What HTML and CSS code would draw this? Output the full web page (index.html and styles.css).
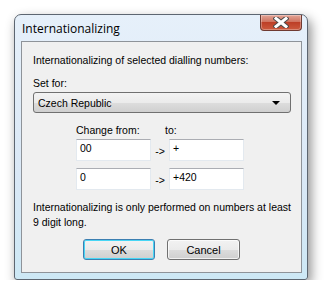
FILE: index.html
```html
<!DOCTYPE html>
<html lang="en">
  <head>
    <meta charset="UTF-8" />
    <title>Internationalizing</title>
    <link rel="stylesheet" href="styles.css">
  </head>
  <body>
    <div class="window">
      <div class="titlebar">
        <span class="title">Internationalizing</span>
        <button class="close" aria-label="Close">
          <svg width="16" height="11" viewBox="0 0 16 11">
            <path d="M3 1.5 L13 9.5 M13 1.5 L3 9.5" stroke="#4a4a4a" stroke-width="5" stroke-linecap="square"/>
            <path d="M3 1.5 L13 9.5 M13 1.5 L3 9.5" stroke="#ffffff" stroke-width="3" stroke-linecap="square"/>
          </svg>
        </button>
      </div>
      <div class="client">
        <p class="line">Internationalizing of selected dialling numbers:</p>
        <p class="label">Set for:</p>
        <div class="combo">
          <span>Czech Republic</span>
          <span class="arrow"></span>
        </div>

        <div class="rules">
          <div class="rule-head">
            <span class="col-from">Change from:</span>
            <span class="col-to">to:</span>
          </div>
          <div class="rule">
            <div class="edit">00</div>
            <span class="sep">-&gt;</span>
            <div class="edit">+</div>
          </div>
          <div class="rule">
            <div class="edit">0</div>
            <span class="sep">-&gt;</span>
            <div class="edit">+420</div>
          </div>
        </div>

        <p class="note">Internationalizing is only performed on numbers at least 9 digit long.</p>

        <div class="buttons">
          <button class="btn default">OK</button>
          <button class="btn">Cancel</button>
        </div>
      </div>
    </div>
  </body>
</html>
```

FILE: styles.css
```css
body {
  margin: 0;
  padding: 0;
  background-color: #ffffff;
  font-family: 'Liberation Sans', Arial, sans-serif;
  font-size: 10.5px;
  color: #000000;
}
.window {
  box-sizing: border-box;
  width: 294px;
  height: 266px;
  margin: 14px 0 0 14px;
  border: 1px solid #5d6671;
  border-radius: 7px 7px 3px 3px;
  background: linear-gradient(#e6f0fa, #dae8f6 60%, #cde8f5);
  box-shadow: 3px 5px 12px rgba(0, 0, 0, 0.45);
  display: flex;
  flex-direction: column;
}
.titlebar {
  height: 26px;
  display: flex;
  align-items: flex-start;
  justify-content: space-between;
  padding-left: 7px;
}
.title {
  font-family: 'Open Sans', 'Liberation Sans', sans-serif;
  font-size: 12px;
  margin-top: 5px;
  color: #000000;
}
.close {
  width: 42px;
  height: 16px;
  margin-right: 5px;
  padding: 0;
  border: 1px solid #6f3a31;
  border-top: none;
  border-radius: 0 0 4px 4px;
  background: linear-gradient(#e3a597, #cf735f 45%, #bd3f27 50%, #cc5a3e);
  box-shadow: inset 0 0 0 1px rgba(255, 255, 255, 0.3);
  display: flex;
  align-items: center;
  justify-content: center;
}
.client {
  box-sizing: border-box;
  flex: 1;
  margin: 0 5px 6px 6px;
  border: 1px solid #8e9399;
  background-color: #f0f0f0;
  padding: 9px 10px 0 11px;
  display: flex;
  flex-direction: column;
}
.client p {
  margin: 0;
  line-height: 15px;
}
.line {
  margin-top: 2px !important;
}
.label {
  margin-top: 8px !important;
}
.combo {
  box-sizing: border-box;
  height: 21px;
  margin-top: 1px;
  border: 1px solid #707070;
  border-radius: 3px;
  background: linear-gradient(#f3f3f3, #ebebeb 50%, #dddddd 51%, #cfcfcf);
  display: flex;
  align-items: center;
  justify-content: space-between;
  padding: 0 10px 0 4px;
}
.arrow {
  width: 0;
  height: 0;
  border-left: 4px solid transparent;
  border-right: 4px solid transparent;
  border-top: 4px solid #000000;
}
.rules {
  margin: 11px 0 0 43px;
  display: flex;
  flex-direction: column;
  gap: 7px;
}
.rule-head {
  display: flex;
  height: 14px;
  margin-bottom: -6px;
}
.col-from {
  width: 89px;
}
.rule {
  display: flex;
  align-items: flex-end;
}
.edit {
  box-sizing: border-box;
  width: 75px;
  height: 22px;
  background-color: #ffffff;
  border: 1px solid #e3e9ef;
  border-top-color: #abadb3;
  padding: 2px 0 0 3px;
}
.sep {
  width: 18px;
  text-align: center;
  line-height: 15px;
  margin-bottom: 2px;
}
.note {
  margin-top: 10px !important;
}
.buttons {
  display: flex;
  gap: 12px;
  margin: 9px 0 0 50px;
}
.btn {
  box-sizing: border-box;
  width: 73px;
  height: 21px;
  padding: 0;
  font-family: 'Liberation Sans', Arial, sans-serif;
  font-size: 11px;
  color: #000000;
  border: 1px solid #707070;
  border-radius: 3px;
  background: linear-gradient(#f2f2f2, #ebebeb 50%, #dddddd 51%, #cfcfcf);
  box-shadow: inset 0 0 0 1px rgba(255, 255, 255, 0.7);
}
.btn.default {
  width: 72px;
  border-color: #3c7fb1;
  box-shadow: inset 0 0 0 1px #48d6f5;
}
```
